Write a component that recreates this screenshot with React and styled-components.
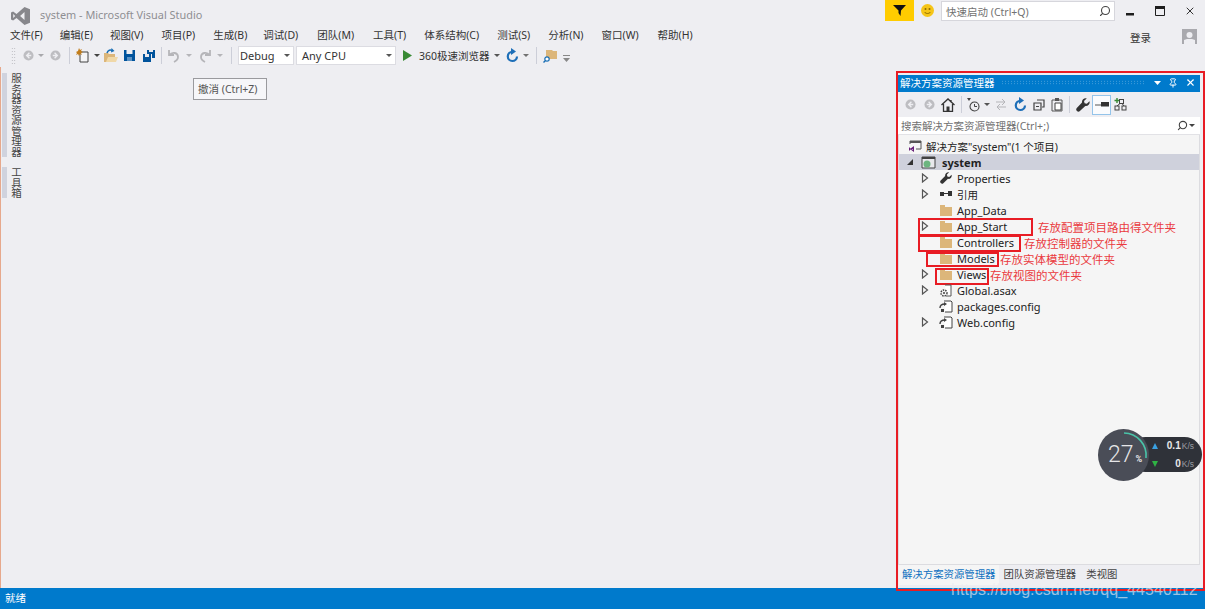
import React from "react";
import styled, { createGlobalStyle } from "styled-components";
import { Search, X, Pin } from "lucide-react";

const GlobalStyle = createGlobalStyle`
  html, body { margin: 0; padding: 0; background: #eeeef2; }
  * { box-sizing: border-box; }
`;

const FONT = `"Noto Sans", "Noto Sans CJK SC", sans-serif`;

const Page = styled.div`
  position: relative;
  width: 1205px;
  height: 609px;
  overflow: hidden;
  display: flex;
  flex-direction: column;
  background: #eeeef2;
  color: #1e1e1e;
  font-family: ${FONT};
  font-size: 11px;
`;

const TitleBar = styled.div`
  height: 27px;
  display: flex;
  align-items: flex-start;
`;

const Logo = styled.div`
  margin: 7px 0 0 11px;
  width: 19px;
  height: 18px;
`;

const AppTitle = styled.div`
  margin: 7px 0 0 10px;
  font-size: 10.9px;
  line-height: 16px;
  color: #8e8e92;
  flex: 1;
`;

const FilterBtn = styled.div`
  width: 29px;
  height: 21px;
  background: #ffcc00;
  display: flex;
  align-items: center;
  justify-content: center;
`;

const Smile = styled.div`
  width: 27px;
  height: 21px;
  display: flex;
  align-items: center;
  justify-content: center;
`;

const QuickLaunch = styled.div`
  width: 174px;
  height: 20px;
  margin-top: 1px;
  background: #fff;
  border: 1px solid #d6d6dc;
  display: flex;
  align-items: center;
  justify-content: space-between;
  padding: 0 3px 0 4px;
  font-size: 10.5px;
  color: #717171;
`;

const WindowBtns = styled.div`
  width: 90px;
  height: 22px;
  display: flex;
  align-items: center;
  color: #1e1e1e;
`;

const WindowBtn = styled.div`
  width: 30px;
  display: flex;
  justify-content: center;
`;

const MenuBar = styled.div`
  height: 17px;
  display: flex;
  align-items: center;
  padding-left: 10px;
`;

const MenuItem = styled.div`
  margin-right: ${(p) => p.$gap}px;
  font-size: 10.5px;
  line-height: 17px;
  white-space: nowrap;
  color: #333;
`;

const Account = styled.div`
  margin-left: auto;
  display: flex;
  align-items: center;
  padding: 3px 8px 0 0;
  font-size: 10.5px;
  gap: 31px;
  color: #333;
`;

const Avatar = styled.div`
  width: 15px;
  height: 15px;
  margin-top: -2px;
  background: #a9a9ae;
  display: flex;
  align-items: flex-end;
  justify-content: center;
`;

const ToolBar = styled.div`
  height: 23px;
  display: flex;
  align-items: center;
  padding-left: 11px;
`;

const Grip = styled.div`
  width: 5px;
  height: 17px;
  margin-right: 4px;
  background-image: radial-gradient(#b5b5ba 40%, transparent 45%);
  background-size: 2.5px 3px;
`;

const Tool = styled.div`
  flex: none;
  width: ${(p) => p.$w || 19}px;
  height: 20px;
  display: flex;
  align-items: center;
  justify-content: center;
  color: ${(p) => p.$color || "#424242"};
`;

const Caret = styled.div`
  flex: none;
  width: ${(p) => p.$w || 9}px;
  height: 20px;
  display: flex;
  align-items: center;
  justify-content: center;
  &::after {
    content: "";
    border-left: 3px solid transparent;
    border-right: 3px solid transparent;
    border-top: 3px solid ${(p) => p.$color || "#717171"};
  }
`;

const Sep = styled.div`
  flex: none;
  width: 1px;
  height: 17px;
  margin: 0 ${(p) => p.$r || p.$m || 5}px 0 ${(p) => p.$m || 5}px;
  background: #ccced8;
`;

const Combo = styled.div`
  flex: none;
  width: ${(p) => p.$w}px;
  height: 19px;
  margin-right: ${(p) => p.$mr || 0}px;
  background: #fff;
  border: 1px solid #dcdce2;
  display: flex;
  align-items: center;
  justify-content: space-between;
  padding-left: ${(p) => p.$pad || 1}px;
  font-size: 11px;
  color: #333;
`;

const RunLabel = styled.div`
  flex: none;
  margin-left: 4px;
  font-size: 10.5px;
  color: #333;
  white-space: nowrap;
`;

const Main = styled.div`
  flex: 1;
  min-height: 0;
  display: flex;
`;

const LeftRail = styled.div`
  width: 24px;
  padding-top: 6px;
  display: flex;
  flex-direction: column;
  gap: 10px;
  border-left: 1px solid #e6a88c;
`;

const RailTab = styled.div`
  height: ${(p) => p.$h}px;
  margin-left: 1px;
  display: flex;
  background: linear-gradient(to right, #d0d3de 5px, transparent 5px);
`;

const RailText = styled.div`
  writing-mode: vertical-rl;
  margin-left: 8px;
  font-size: 10.5px;
  line-height: 12px;
  color: #444;
  white-space: nowrap;
`;

const Center = styled.div`
  flex: 1;
`;

const Tooltip = styled.div`
  position: absolute;
  left: 193px;
  top: 78px;
  width: 74px;
  height: 22px;
  background: #f6f6f9;
  border: 1px solid #9a9a9e;
  font-size: 10.5px;
  line-height: 20px;
  padding-left: 4px;
  color: #555;
  white-space: nowrap;
`;

const Panel = styled.div`
  width: 302px;
  margin: 8px 5px 3px 0;
  display: flex;
  flex-direction: column;
`;

const PanelTitle = styled.div`
  height: 17px;
  background: #007acc;
  color: #fff;
  display: flex;
  align-items: center;
  padding: 0 4px 2px 2px;
  font-size: 10.5px;
  white-space: nowrap;
`;

const TitleDots = styled.div`
  flex: 1;
  height: 5px;
  margin: 0 8px 0 6px;
  background-image: radial-gradient(#4fa3dc 40%, transparent 45%);
  background-size: 3px 2.5px;
`;

const PanelBtns = styled.div`
  display: flex;
  align-items: center;
  gap: 7px;
`;

const PanelTools = styled.div`
  height: 25px;
  display: flex;
  align-items: center;
  padding-left: 3px;
`;

const ActiveTool = styled(Tool)`
  border: 1px solid #94c4ea;
  background: #fafbfd;
`;

const PanelSearch = styled.div`
  height: 18px;
  background: #fff;
  border-bottom: 1px solid #e2e2e6;
  display: flex;
  align-items: center;
  justify-content: space-between;
  padding: 0 3px;
  font-size: 10.5px;
  color: #717171;
`;

const Tree = styled.div`
  flex: 1;
  position: relative;
  padding-top: 3px;
  background: #f5f5f5;
  border: 1px solid #dcdce0;
  border-top: 0;
`;

const Row = styled.div`
  position: relative;
  height: 16px;
  display: flex;
  align-items: center;
  padding-left: ${(p) => p.$indent}px;
  background: ${(p) => (p.$selected ? "#cfd1dc" : "transparent")};
  font-size: ${(p) => (p.$zh ? 10.5 : 11)}px;
  font-weight: ${(p) => (p.$selected ? 700 : 400)};
  color: #222;
  white-space: nowrap;
`;

const Expander = styled.div`
  flex: none;
  width: 16px;
  height: 16px;
  display: flex;
  align-items: center;
  justify-content: center;
`;

const RowIcon = styled.div`
  flex: none;
  width: 16px;
  height: 16px;
  margin-left: ${(p) => p.$ml || 0}px;
  margin-right: ${(p) => p.$mr ?? 1}px;
  display: flex;
  align-items: center;
  justify-content: center;
`;

const Folder = styled.div`
  position: relative;
  width: 12px;
  height: 9px;
  margin-top: 2px;
  background: #dcb67a;
  &::before {
    content: "";
    position: absolute;
    left: 0;
    top: -2px;
    width: 5px;
    height: 2px;
    background: #dcb67a;
  }
`;

const RedBox = styled.div`
  position: absolute;
  left: ${(p) => p.$left}px;
  top: ${(p) => p.$top}px;
  width: ${(p) => p.$w}px;
  height: ${(p) => p.$h}px;
  border: 2px solid #e81c24;
  pointer-events: none;
`;

const Note = styled.div`
  position: absolute;
  left: ${(p) => p.$left}px;
  top: 2px;
  font-size: 11.5px;
  line-height: 16px;
  font-weight: 400;
  color: #ea3a3e;
`;

const Tabs = styled.div`
  height: 20px;
  display: flex;
  padding-left: 1px;
`;

const Tab = styled.div`
  height: 20px;
  padding: 1px 3px 0 3px;
  margin-right: ${(p) => p.$gap || 2}px;
  font-size: 10.4px;
  line-height: 16px;
  white-space: nowrap;
  color: ${(p) => (p.$active ? "#0e70c0" : "#444")};
  background: ${(p) => (p.$active ? "#f5f5f5" : "transparent")};
`;

const StatusBar = styled.div`
  height: 21px;
  flex: none;
  background: #007acc;
  color: #fff;
  padding-left: 5px;
  font-size: 10.5px;
  line-height: 21px;
`;

const OuterFrame = styled.div`
  position: absolute;
  left: 896px;
  top: 71px;
  width: 309px;
  height: 520px;
  border: 2px solid #e81c24;
  pointer-events: none;
`;

const Watermark = styled.div`
  position: absolute;
  left: 951px;
  top: 580px;
  font-family: "Liberation Sans", sans-serif;
  font-size: 16px;
  line-height: 20px;
  letter-spacing: 0.07px;
  color: rgba(235, 235, 240, 0.66);
  white-space: nowrap;
`;

const Speed = styled.div`
  position: absolute;
  left: 1098px;
  top: 429px;
  width: 105px;
  height: 52px;
`;

const SpeedPill = styled.div`
  position: absolute;
  left: 30px;
  top: 8px;
  width: 74px;
  height: 35px;
  border-radius: 18px;
  background: #2f3239;
  display: flex;
  flex-direction: column;
  justify-content: center;
  padding: 0 8px 0 24px;
  font-family: "Liberation Sans", sans-serif;
`;

const SpeedRow = styled.div`
  position: relative;
  display: flex;
  align-items: baseline;
  justify-content: flex-end;
  line-height: 18px;
  font-size: 10px;
  font-weight: 700;
  color: #e8e8ea;
`;

const SpeedUnit = styled.span`
  font-size: 8.5px;
  font-weight: 400;
  color: #9a9ca2;
  margin-left: 1px;
`;

const SpeedArrow = styled.span`
  position: absolute;
  left: 0;
  top: 6px;
  width: 0;
  height: 0;
  border-left: 3px solid transparent;
  border-right: 3px solid transparent;
  border-${(p) => (p.$up ? "bottom" : "top")}: 6px solid ${(p) => p.$color};
`;

const SpeedDial = styled.div`
  position: absolute;
  left: 0;
  top: 0;
  width: 51px;
  height: 52px;
  border-radius: 50%;
  background: #4a4d57;
`;

const DialText = styled.div`
  position: absolute;
  left: 10px;
  top: 12px;
  font-family: Roboto, sans-serif;
  font-weight: 300;
  font-size: 23px;
  line-height: 28px;
  color: #e6e6e8;
  white-space: nowrap;
  & small {
    font-size: 9px;
    font-weight: 700;
    margin-left: 2px;
  }
`;

const menus = [
  ["文件(F)", 17], ["编辑(E)", 17], ["视图(V)", 18], ["项目(P)", 18], ["生成(B)", 16], ["调试(D)", 19],
  ["团队(M)", 19], ["工具(T)", 18], ["体系结构(C)", 18], ["测试(S)", 18], ["分析(N)", 18], ["窗口(W)", 19], ["帮助(H)", 0],
];

function ArrowCircle({ dir = "left" }) {
  return (
    <svg width="11" height="11" viewBox="0 0 12 12">
      <circle cx="6" cy="6" r="5.5" fill="#bdbdc1" />
      <path d={dir === "left" ? "M7 3 4 6l3 3M4 6h5" : "M5 3l3 3-3 3M8 6H3"} stroke="#eeeef2" strokeWidth="1.5" fill="none" />
    </svg>
  );
}

function Refresh() {
  return (
    <svg width="14" height="15" viewBox="0 0 14 15">
      <path d="M7.5 3.8A4.6 4.6 0 1 0 12 8.5" fill="none" stroke="#1e6fb8" strokeWidth="2.2" />
      <path d="M6 0l5 3.6L6 7z" fill="#1e6fb8" />
    </svg>
  );
}

function WrenchIcon({ size = 14 }) {
  return (
    <svg width={size} height={size} viewBox="0 0 14 14">
      <path d="M13.5 3.2 10.8 5.8 8.6 5.2 8 3l2.7-2.6C8.3-.3 5.6 1.6 6 4.6L.8 10a2.2 2.2 0 0 0 3.1 3.1L9.3 8c3 .5 5-2.4 4.2-4.8z" fill="#333" />
    </svg>
  );
}

function HomeIcon() {
  return (
    <svg width="14" height="14" viewBox="0 0 14 14">
      <path d="M0.5 7 7 1l6.5 6M2.5 6v7.5h9V6M10 2v2.5" fill="none" stroke="#333" strokeWidth="1.3" />
      <path d="M5.5 8.5h3v5h-3z" fill="#333" />
    </svg>
  );
}

function FolderOpen() {
  return (
    <svg width="15" height="15" viewBox="0 0 15 15">
      <path d="M1 5h4l1 1h6v8H1z" fill="#dcb67a" />
      <path d="M3 14 5 9h10l-2 5z" fill="#f0d8a8" />
      <path d="M4 5C5 2 7.500 1.500 9 2.500" stroke="#1a6fb5" strokeWidth="1.6" fill="none" />
      <path d="M8.500 0l3 3L8 4.500z" fill="#1a6fb5" />
    </svg>
  );
}

function Floppy({ double }) {
  if (double) {
    return (
      <svg width="14" height="14" viewBox="0 0 14 14">
        <path d="M5 1h8v8h-3V5H5z" fill="#00539c" />
        <path d="M1 5h8v8H1z" fill="#00539c" />
        <path d="M3 5h4v3H3zM7 1h4v2H7z" fill="#e8e8ee" />
      </svg>
    );
  }
  return (
    <svg width="13" height="13" viewBox="0 0 13 13">
      <path d="M1 1h11v11H1z" fill="#00539c" />
      <path d="M3.500 1h6v4h-6z" fill="#eeeef2" />
      <path d="M4 8h5v4H4z" fill="#5b92c4" />
    </svg>
  );
}

function TreeCaret({ open }) {
  if (open) {
    return (
      <svg width="8" height="8" viewBox="0 0 8 8">
        <path d="M7 1v6H1z" fill="#333" />
      </svg>
    );
  }
  return (
    <svg width="8" height="10" viewBox="0 0 8 10">
      <path d="M1.500 1 6.500 5l-5 4z" fill="none" stroke="#555" strokeWidth="1.2" />
    </svg>
  );
}

function ConfigIcon() {
  return (
    <svg width="15" height="15" viewBox="0 0 15 15">
      <path d="M5 2h7l1 1v10H6" fill="#fff" stroke="#424242" strokeWidth="1" />
      <path d="M1 9c0-3 2-4 5-4" stroke="#424242" strokeWidth="1.4" fill="none" />
      <path d="M5 3v4l3-2z" fill="#424242" />
      <path d="M2 10h3v3H2z" fill="#424242" />
    </svg>
  );
}

function AsaxIcon() {
  return (
    <svg width="15" height="15" viewBox="0 0 15 15">
      <path d="M6 2h6v11H7" fill="#fff" stroke="#555" strokeWidth="1" />
      <circle cx="5" cy="10" r="3" fill="none" stroke="#424242" strokeWidth="1.4" strokeDasharray="1.500 1" />
      <circle cx="5" cy="10" r="1" fill="#424242" />
    </svg>
  );
}

function Annotated({ children, note, left }) {
  return (
    <>
      {children}
      <Note $left={left}>{note}</Note>
    </>
  );
}

export default function App() {
  return (
    <Page>
      <GlobalStyle />
      <TitleBar>
        <Logo>
          <svg width="19" height="18" viewBox="0 0 19 18">
            <path d="M13.500 0 19 2.200v13.600L13.500 18 5.500 11l-3.400 2.600L0 12.500v-7l2.100-1.100L5.500 7zM13.500 5l-4.400 4 4.400 4zM2.200 7v4l2-2z" fill="#87878c" fillRule="evenodd" />
          </svg>
        </Logo>
        <AppTitle>system - Microsoft Visual Studio</AppTitle>
        <FilterBtn>
          <svg width="13" height="13" viewBox="0 0 13 13">
            <path d="M0 1h13L8 6.500 7.500 12 5.500 9V6.500z" fill="#111" />
          </svg>
        </FilterBtn>
        <Smile>
          <svg width="13" height="13" viewBox="0 0 13 13">
            <circle cx="6.500" cy="6.500" r="6.500" fill="#f5c518" />
            <circle cx="4.500" cy="5" r="1" fill="#8a6a00" />
            <circle cx="8.500" cy="5" r="1" fill="#8a6a00" />
            <path d="M3.500 8c1.500 2 4.500 2 6 0" stroke="#8a6a00" fill="none" />
          </svg>
        </Smile>
        <QuickLaunch>
          快速启动 (Ctrl+Q)
          <Search size={12} color="#444" strokeWidth={2.2} style={{ transform: "scaleX(-1)" }} />
        </QuickLaunch>
        <WindowBtns>
          <WindowBtn>
            <svg width="10" height="10" viewBox="0 0 10 10"><path d="M1 7h8v2.500H1z" fill="#1e1e1e" /></svg>
          </WindowBtn>
          <WindowBtn>
            <svg width="10" height="10" viewBox="0 0 10 10"><path d="M.5 2.500h9v7h-9z" fill="none" stroke="#1e1e1e" /><path d="M0 0h10v3H0z" fill="#1e1e1e" /></svg>
          </WindowBtn>
          <WindowBtn><X size={12} strokeWidth={1.8} /></WindowBtn>
        </WindowBtns>
      </TitleBar>

      <MenuBar>
        {menus.map(([label, gap]) => (
          <MenuItem key={label} $gap={gap}>{label}</MenuItem>
        ))}
        <Account>
          登录
          <Avatar>
            <svg width="11" height="13" viewBox="0 0 11 13">
              <circle cx="5.500" cy="4" r="3" fill="#eeeef2" />
              <path d="M0 13V9l3-1h5l3 1v4z" fill="#eeeef2" />
            </svg>
          </Avatar>
        </Account>
      </MenuBar>

      <ToolBar>
        <Grip />
        <Tool $w={16}><ArrowCircle /></Tool>
        <Caret $w={10} $color="#a8a8ac" />
        <Tool $w={19}><ArrowCircle dir="right" /></Tool>
        <Sep $m={4} />
        <Tool $w={18}>
          <svg width="14" height="15" viewBox="0 0 14 15">
            <path d="M4 4h8v10H4z" fill="#f5f5f7" stroke="#424242" />
            <path d="M3 0l1 2 2-1-1 2 2 1-2 1 1 2-2-1-1 2-1-2-2 1 1-2-1-1 2-1z" fill="#c27d1a" />
          </svg>
        </Tool>
        <Caret $w={10} $color="#424242" />
        <Tool $w={17}><FolderOpen /></Tool>
        <Tool $w={20}><Floppy /></Tool>
        <Tool $w={19}><Floppy double /></Tool>
        <Sep $m={3} />
        <Tool $w={17} $color="#b5b5b9">
          <svg width="14" height="14" viewBox="0 0 14 14">
            <path d="M2 1v5h5M2.500 6C5 2.500 11 3.500 11 8c0 2.500-2 4-4 5" stroke="currentColor" strokeWidth="1.8" fill="none" />
          </svg>
        </Tool>
        <Caret $w={14} $color="#b5b5b9" />
        <Tool $w={17} $color="#b5b5b9">
          <svg width="14" height="14" viewBox="0 0 14 14">
            <path d="M12 1v5H7M11.500 6C9 2.500 3 3.500 3 8c0 2.500 2 4 4 5" stroke="currentColor" strokeWidth="1.8" fill="none" />
          </svg>
        </Tool>
        <Caret $w={14} $color="#b5b5b9" />
        <Sep $m={4} $r={6} />
        <Combo $w={56} $mr={2} $pad={1}>
          Debug
          <Caret $w={12} $color="#555" />
        </Combo>
        <Combo $w={100} $mr={4} $pad={5}>
          Any CPU
          <Caret $w={12} $color="#555" />
        </Combo>
        <Tool $w={15}>
          <svg width="9" height="11" viewBox="0 0 9 11"><path d="M0 0l9 5.500L0 11z" fill="#388a34" /></svg>
        </Tool>
        <RunLabel>360极速浏览器</RunLabel>
        <Caret $w={15} $color="#555" />
        <Tool $w={15}><Refresh /></Tool>
        <Caret $w={13} $color="#717171" />
        <Sep $m={3} />
        <Tool $w={20}>
          <svg width="14" height="14" viewBox="0 0 14 14">
            <path d="M3 1h6l1 1h4v8H3z" fill="#dcb67a" />
            <circle cx="4" cy="10" r="2.200" fill="#fff" stroke="#1a6fb5" strokeWidth="1.2" />
            <path d="M2.500 11.500 0.500 13.500" stroke="#1a6fb5" strokeWidth="1.4" />
          </svg>
        </Tool>
        <Tool $w={13}>
          <svg width="7" height="8" viewBox="0 0 7 8" style={{ marginTop: 6 }}>
            <path d="M0 0h7v1H0z" fill="#888" />
            <path d="M0 3h7L3.500 7z" fill="#888" />
          </svg>
        </Tool>
      </ToolBar>

      <Main>
        <LeftRail>
          <RailTab $h={84}><RailText>服务器资源管理器</RailText></RailTab>
          <RailTab $h={31}><RailText>工具箱</RailText></RailTab>
        </LeftRail>
        <Center />
        <Panel>
          <PanelTitle>
            解决方案资源管理器
            <TitleDots />
            <PanelBtns>
              <svg width="7" height="4" viewBox="0 0 7 4"><path d="M0 0h7L3.500 4z" fill="#fff" /></svg>
              <Pin size={10} color="#fff" strokeWidth={2.4} />
              <X size={11} color="#fff" strokeWidth={2.4} />
            </PanelBtns>
          </PanelTitle>
          <PanelTools>
            <Tool $w={19}><ArrowCircle /></Tool>
            <Tool $w={18}><ArrowCircle dir="right" /></Tool>
            <Tool $w={20}><HomeIcon /></Tool>
            <Sep $m={3} />
            <Tool $w={17}>
              <svg width="13" height="14" viewBox="0 0 13 14">
                <circle cx="7.500" cy="8.500" r="4.500" fill="none" stroke="#424242" strokeWidth="1.100" />
                <path d="M7.500 6v2.500h2.500" stroke="#424242" fill="none" />
                <path d="M0 0h4L2 3z" fill="#424242" />
              </svg>
            </Tool>
            <Caret $w={9} $color="#555" />
            <Tool $w={19} $color="#b5b5b9">
              <svg width="12" height="11" viewBox="0 0 12 11">
                <path d="M1 3h9M7 0l3 3-3 3M11 8H2M5 5 2 8l3 3" stroke="currentColor" fill="none" />
              </svg>
            </Tool>
            <Tool $w={19}><Refresh /></Tool>
            <Tool $w={19}>
              <svg width="12" height="12" viewBox="0 0 12 12">
                <path d="M4 1h7v7H9M1 4h7v7H1z" fill="none" stroke="#424242" strokeWidth="1.2" />
                <path d="M3 7.500h3" stroke="#424242" />
              </svg>
            </Tool>
            <Tool $w={18}>
              <svg width="12" height="14" viewBox="0 0 12 14">
                <path d="M1 2h10v11H1z" fill="none" stroke="#555" />
                <path d="M4 5h6v7H4z" fill="#fff" stroke="#424242" />
                <path d="M4 0h4v3H4z" fill="#555" />
              </svg>
            </Tool>
            <Sep $m={3} />
            <Tool $w={19}><WrenchIcon /></Tool>
            <ActiveTool $w={19}>
              <svg width="14" height="5" viewBox="0 0 14 5"><path d="M0 2.500h6v1H0z" fill="#555" /><path d="M6 0h8v4.500H6z" fill="#333" /></svg>
            </ActiveTool>
            <Tool $w={19}>
              <svg width="13" height="13" viewBox="0 0 13 13">
                <path d="M3 0v5M0.500 2.500h5" stroke="#388a34" strokeWidth="1.4" />
                <rect x="5.500" y="1.500" width="4" height="4" fill="none" stroke="#424242" />
                <rect x="1" y="8" width="4" height="4" fill="none" stroke="#424242" />
                <rect x="8" y="8" width="4" height="4" fill="none" stroke="#424242" />
                <path d="M6 5.500 3 8M8 5.500l2 2.500" stroke="#424242" />
              </svg>
            </Tool>
          </PanelTools>
          <PanelSearch>
            搜索解决方案资源管理器(Ctrl+;)
            <Tool $w={22}>
              <Search size={11} strokeWidth={2.4} style={{ transform: "scaleX(-1)" }} />
              <Caret $w={8} $color="#424242" />
            </Tool>
          </PanelSearch>
          <Tree>
            <Row $indent={8} $zh>
              <RowIcon $mr={3}>
                <svg width="14" height="13" viewBox="0 0 14 13">
                  <path d="M2 4V1h11v8H8" fill="none" stroke="#555" strokeWidth="1" />
                  <path d="M2 1h11v2H2z" fill="#555" />
                  <path d="M1 7l1.500 1.500L6 6v6L2.500 9.500 1 11zM4.800 9 3.500 9l1.300 1z" fill="#68217a" fillRule="evenodd" />
                </svg>
              </RowIcon>
              解决方案"system"(1 个项目)
            </Row>
            <Row $indent={3} $selected>
              <Expander><TreeCaret open /></Expander>
              <RowIcon $ml={2} $mr={6}>
                <svg width="15" height="13" viewBox="0 0 15 13">
                  <path d="M1 1h13v11H1z" fill="#e8e8ec" stroke="#424242" />
                  <path d="M1 1h13v2H1z" fill="#424242" />
                  <circle cx="6" cy="8" r="3.500" fill="#6cb57f" />
                </svg>
              </RowIcon>
              system
            </Row>
            <Row $indent={18}>
              <Expander><TreeCaret /></Expander>
              <RowIcon $ml={5} $mr={3}><WrenchIcon size={12} /></RowIcon>
              Properties
            </Row>
            <Row $indent={18} $zh>
              <Expander><TreeCaret /></Expander>
              <RowIcon $ml={5} $mr={3}>
                <svg width="12" height="6" viewBox="0 0 12 6">
                  <path d="M0 1h4v4H0zM8 0h4v5H8z" fill="#333" />
                  <path d="M4 2.500h4" stroke="#333" />
                </svg>
              </RowIcon>
              引用
            </Row>
            <Row $indent={39}>
              <RowIcon $mr={3}><Folder /></RowIcon>
              App_Data
            </Row>
            <Row $indent={18}>
              <Annotated note="存放配置项目路由得文件夹" left={139}>
                <Expander><TreeCaret /></Expander>
                <RowIcon $ml={5} $mr={3}><Folder /></RowIcon>
                App_Start
              </Annotated>
              <RedBox $left={19} $top={0} $w={115} $h={18} />
            </Row>
            <Row $indent={39}>
              <Annotated note="存放控制器的文件夹" left={125}>
                <RowIcon $mr={3}><Folder /></RowIcon>
                Controllers
              </Annotated>
              <RedBox $left={19} $top={1} $w={103} $h={17} />
            </Row>
            <Row $indent={39}>
              <Annotated note="存放实体模型的文件夹" left={101}>
                <RowIcon $mr={3}><Folder /></RowIcon>
                Models
              </Annotated>
              <RedBox $left={27} $top={2} $w={73} $h={15} />
            </Row>
            <Row $indent={18}>
              <Annotated note="存放视图的文件夹" left={91}>
                <Expander><TreeCaret /></Expander>
                <RowIcon $ml={5} $mr={3}><Folder /></RowIcon>
                Views
              </Annotated>
              <RedBox $left={36} $top={2} $w={54} $h={17} />
            </Row>
            <Row $indent={18}>
              <Expander><TreeCaret /></Expander>
              <RowIcon $ml={5} $mr={3}><AsaxIcon /></RowIcon>
              Global.asax
            </Row>
            <Row $indent={39}>
              <RowIcon $mr={3}><ConfigIcon /></RowIcon>
              packages.config
            </Row>
            <Row $indent={18}>
              <Expander><TreeCaret /></Expander>
              <RowIcon $ml={5} $mr={3}><ConfigIcon /></RowIcon>
              Web.config
            </Row>
          </Tree>
          <Tabs>
            <Tab $active>解决方案资源管理器</Tab>
            <Tab $gap={4}>团队资源管理器</Tab>
            <Tab>类视图</Tab>
          </Tabs>
        </Panel>
      </Main>

      <StatusBar>就绪</StatusBar>

      <Tooltip>撤消 (Ctrl+Z)</Tooltip>
      <OuterFrame />
      <Speed>
        <SpeedPill>
          <SpeedRow><SpeedArrow $up $color="#3aa0e0" />0.1<SpeedUnit>K/s</SpeedUnit></SpeedRow>
          <SpeedRow><SpeedArrow $color="#2fb344" />0<SpeedUnit>K/s</SpeedUnit></SpeedRow>
        </SpeedPill>
        <SpeedDial>
          <svg width="51" height="52" viewBox="0 0 51 52">
            <path d="M26 4A22.500 22.500 0 0 1 48 29" fill="none" stroke="#49c3a8" strokeWidth="1.6" />
          </svg>
          <DialText>27<small>%</small></DialText>
        </SpeedDial>
      </Speed>
      <Watermark>https://blog.csdn.net/qq_44540112</Watermark>
    </Page>
  );
}
